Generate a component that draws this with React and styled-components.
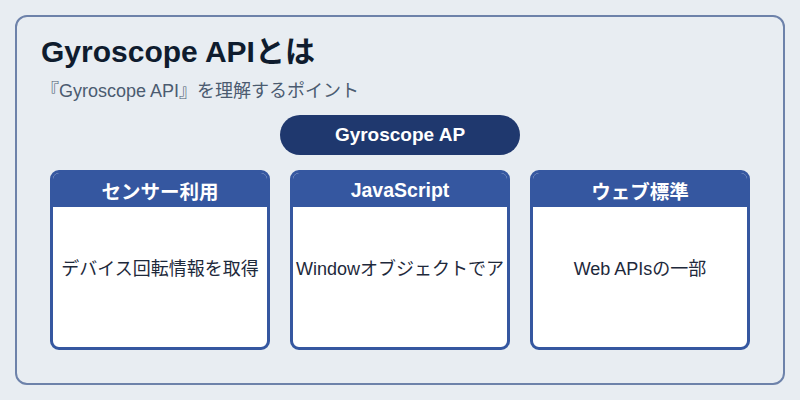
import React from "react";
import styled, { createGlobalStyle } from "styled-components";

const Global = createGlobalStyle`
  html, body { margin: 0; padding: 0; background: #e8edf2; }
  body { font-family: "Liberation Sans", "Noto Sans CJK JP", sans-serif; }
`;

const Frame = styled.div`
  box-sizing: border-box;
  margin: 15px;
  width: 770px;
  height: 370px;
  border: 2px solid #6d82aa;
  border-radius: 12px;
  background: #e8edf2;
  padding: 16px 33px 0 24px;
  display: flex;
  flex-direction: column;
`;

const Title = styled.h1`
  margin: 0;
  font-size: 30px;
  line-height: 38px;
  font-weight: 700;
  color: #0f1c2e;
`;

const Subtitle = styled.p`
  margin: 8px 0 0 0;
  font-size: 18px;
  line-height: 24px;
  color: #4b5b70;
`;

const PillRow = styled.div`
  display: flex;
  justify-content: center;
  margin-top: 12px;
  padding-left: 9px;
`;

const Pill = styled.div`
  width: 240px;
  height: 40px;
  border-radius: 20px;
  background: #1f386e;
  color: #ffffff;
  font-size: 19px;
  font-weight: 700;
  display: flex;
  align-items: center;
  justify-content: center;
`;

const Cards = styled.div`
  display: grid;
  grid-template-columns: repeat(3, 220px);
  gap: 20px;
  margin-top: 15px;
  padding-left: 9px;
`;

const Card = styled.div`
  box-sizing: border-box;
  height: 180px;
  border: 3px solid #3557a0;
  border-radius: 9px;
  background: #ffffff;
  overflow: hidden;
  display: flex;
  flex-direction: column;
`;

const CardHeader = styled.div`
  height: 34px;
  background: #3557a0;
  color: #ffffff;
  font-size: 19.5px;
  font-weight: 700;
  display: flex;
  align-items: center;
  justify-content: center;
`;

const CardBody = styled.div`
  flex: 1;
  display: flex;
  align-items: center;
  padding: 0 2px 20px;
`;

const CardText = styled.div`
  width: 100%;
  text-align: center;
  white-space: nowrap;
  overflow: hidden;
  font-size: 18px;
  color: #1e293b;
`;

const items = [
  { head: "センサー利用", body: "デバイス回転情報を取得" },
  { head: "JavaScript", body: "Windowオブジェクトでア" },
  { head: "ウェブ標準", body: "Web APIsの一部" },
];

export default function App() {
  return (
    <>
      <Global />
      <Frame>
        <Title>Gyroscope APIとは</Title>
        <Subtitle>『Gyroscope API』を理解するポイント</Subtitle>
        <PillRow>
          <Pill>Gyroscope AP</Pill>
        </PillRow>
        <Cards>
          {items.map((it) => (
            <Card key={it.head}>
              <CardHeader>{it.head}</CardHeader>
              <CardBody>
                <CardText>{it.body}</CardText>
              </CardBody>
            </Card>
          ))}
        </Cards>
      </Frame>
    </>
  );
}
